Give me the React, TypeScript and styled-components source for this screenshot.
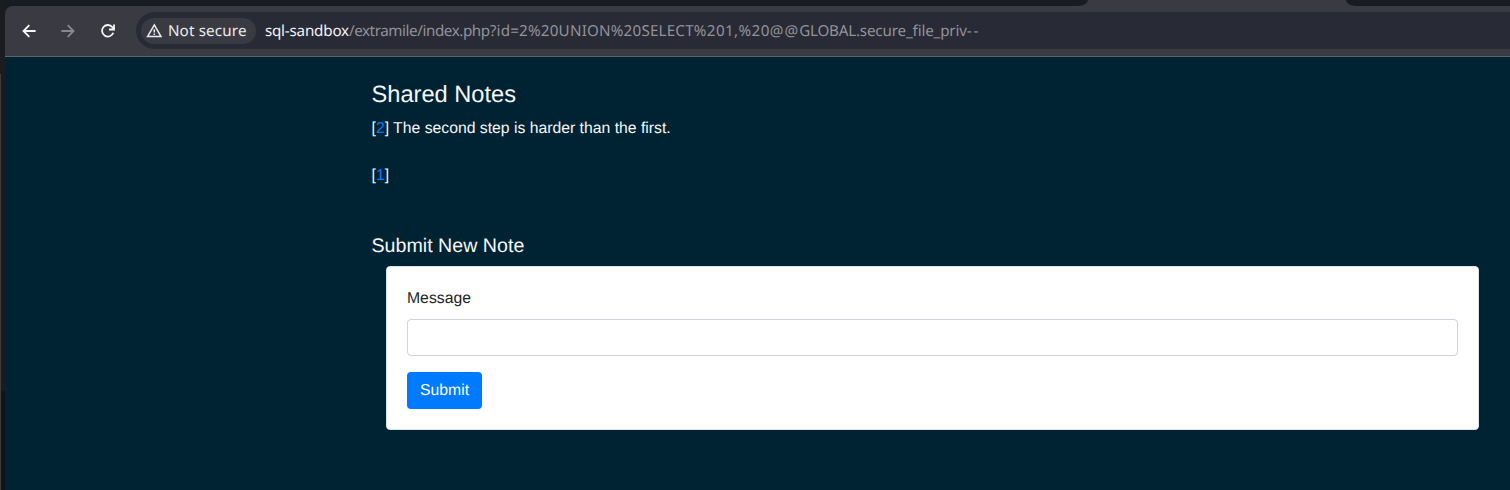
import React from 'react';
import styled, { createGlobalStyle } from 'styled-components';

const GlobalStyle = createGlobalStyle`
  *, *::before, *::after { box-sizing: border-box; }
  html, body { margin: 0; height: 490px; overflow: hidden; background: #1b1d22; }
`;

const Desktop = styled.div`
  display: grid;
  grid-template-columns: 5px 1fr;
  width: 1510px;
  height: 490px;
  overflow: hidden;
  background: #1a1c24;
  font-family: 'Liberation Sans', Arial, sans-serif;
  text-rendering: geometricPrecision;
`;

const WindowEdge = styled.div`
  background: linear-gradient(#1b1c1f 0 390px, #111414 392px 100%);
  padding-top: 74px;

  &::before {
    content: '';
    display: block;
    width: 1px;
    height: 416px;
    background: #3b3c3f;
  }
`;

const Browser = styled.div`
  display: flex;
  flex-direction: column;
  min-width: 0;
`;

const TabStrip = styled.div`
  display: flex;
  flex: 0 0 6px;
  background: #3a3b42;
`;

const StripSegment = styled.div<{ $width?: number; $side: 'left' | 'right' }>`
  ${({ $width }) => ($width ? `width: ${$width}px;` : 'flex: 1;')}
  background: #191b24;
  border-radius: ${({ $side }) => ($side === 'left' ? '0 0 10px 0 / 0 0 6px 0' : '0 0 0 10px / 0 0 0 6px')};
`;

const ActiveTab = styled.div`
  width: 258px;
  background: #3a3b42;
`;

const ToolbarShell = styled.div`
  flex: 0 0 51px;
  background: #191b24;
`;

const Toolbar = styled.div`
  display: flex;
  align-items: center;
  height: 51px;
  padding: 0 0 1px 14px;
  border-bottom: 1px solid #626367;
  border-radius: 8px 0 0 0;
  background: #3a3b42;
`;

const NavButton = styled.button<{ $dim?: boolean }>`
  display: flex;
  width: 20px;
  height: 20px;
  margin: 0 19.3px 0 0;
  padding: 0;
  border: 0;
  background: none;
  color: ${({ $dim }) => ($dim ? '#88898d' : '#f8f8f9')};
`;

const AddressBar = styled.div`
  display: flex;
  flex: 1;
  align-items: center;
  height: 37px;
  margin-left: -1px;
  padding-left: 5px;
  border-radius: 19px 0 0 19px;
  background: #282a35;
  font: 15.2px/20px 'Noto Sans', sans-serif;
  white-space: pre;
`;

const SecurityChip = styled.div`
  display: flex;
  flex: 0 0 115px;
  align-items: center;
  gap: 6px;
  height: 26px;
  padding-left: 5px;
  border-radius: 13px;
  background: #3a3b42;
  color: #ebebed;
  letter-spacing: 0.15px;
`;

const Url = styled.div`
  margin-left: 9px;
  color: #929399;
`;

const UrlPart = styled.span<{ $tracking: number; $host?: boolean }>`
  color: ${({ $host }) => ($host ? '#f3f3f5' : 'inherit')};
  letter-spacing: ${({ $tracking }) => $tracking}px;
`;

const Page = styled.main`
  flex: 1;
  padding: 24px 31px 0 366.5px;
  background: #002333;
  color: #f5f7f8;
  font-size: 15.76px;
  line-height: 23.4px;
`;

const Title = styled.h1`
  margin: 0 0 8px;
  font-size: 23.63px;
  font-weight: 400;
  line-height: 28px;
`;

const Note = styled.p`
  height: 23.4px;
  margin: 0 0 23.4px;
`;

const NoteLink = styled.a`
  color: #007bff;
`;

const Subtitle = styled.h2`
  margin: 0 0 8px;
  padding-top: 23px;
  font-size: 19.65px;
  font-weight: 400;
  line-height: 24px;
`;

const Card = styled.form`
  height: 164px;
  margin-left: 14.5px;
  padding: 20px;
  border: 1px solid #dfe2e4;
  border-radius: 4px;
  background: #fff;
  color: #212529;
`;

const Label = styled.label`
  display: block;
  margin-bottom: 8.6px;
`;

const Input = styled.input`
  display: block;
  width: 100%;
  height: 37px;
  margin-bottom: 16px;
  padding: 6px 12px;
  border: 1px solid #ced4da;
  border-radius: 4px;
  background: #fff;
`;

const SubmitButton = styled.button`
  width: 75px;
  height: 37px;
  padding: 1px 0 0;
  border: 0;
  border-radius: 4px;
  background: #007bff;
  color: #fff;
  font: 15.76px/23px 'Liberation Sans', Arial, sans-serif;
  text-rendering: inherit;
`;

const BackIcon = () => (
  <svg width="20" height="20" viewBox="0 0 20 20" fill="none" stroke="currentColor" strokeWidth="1.8">
    <path d="M16.6 10H4.8M10.3 4.2 4.5 10l5.8 5.8" />
  </svg>
);

const ForwardIcon = () => (
  <svg width="20" height="20" viewBox="0 0 20 20" fill="none" stroke="currentColor" strokeWidth="1.8">
    <path d="M3.4 10h11.8M9.7 4.2l5.8 5.8-5.8 5.8" />
  </svg>
);

const ReloadIcon = () => (
  <svg width="20" height="20" viewBox="0 0 20 20" fill="none" stroke="currentColor" strokeWidth="1.8">
    <path d="M15.3 11.8A5.8 5.8 0 1 1 14.4 6.2L15.8 8" />
    <path d="M16 3.4v5.1h-5" />
  </svg>
);

const WarningIcon = () => (
  <svg width="16" height="16" viewBox="0 0 16 16" fill="none" stroke="currentColor" strokeWidth="1.5">
    <path d="M8.3 1.9 15 13.6H1.6Z" />
    <path d="M8.3 6.2v3.3M8.3 10.6v1.5" />
  </svg>
);

export default function App() {
  return (
    <>
      <GlobalStyle />
      <Desktop>
        <WindowEdge />
        <Browser>
          <TabStrip>
            <StripSegment $width={1083} $side="left" />
            <ActiveTab />
            <StripSegment $side="right" />
          </TabStrip>
          <ToolbarShell>
            <Toolbar>
              <NavButton aria-label="Back"><BackIcon /></NavButton>
              <NavButton $dim aria-label="Forward"><ForwardIcon /></NavButton>
              <NavButton aria-label="Reload"><ReloadIcon /></NavButton>
              <AddressBar>
                <SecurityChip>
                  <WarningIcon />
                  <span>Not secure</span>
                </SecurityChip>
                <Url>
                  <UrlPart $host $tracking={-0.2}>sql-sandbox</UrlPart>
                  <UrlPart $tracking={-0.42}>/extramile/index.php</UrlPart>
                  <UrlPart $tracking={0.2}>?id=2%20UNION%20SELECT</UrlPart>
                  <UrlPart $tracking={0.4}>%201,%20</UrlPart>
                  <UrlPart $tracking={1.1}>@@</UrlPart>
                  <UrlPart $tracking={-0.25}>GLOBAL</UrlPart>
                  <UrlPart $tracking={-0.15}>.secure_file_priv</UrlPart>
                  <UrlPart $tracking={1.9}>--</UrlPart>
                </Url>
              </AddressBar>
            </Toolbar>
          </ToolbarShell>
          <Page>
            <Title>Shared Notes</Title>
            <Note>[<NoteLink>2</NoteLink>] The second step is harder than the first.</Note>
            <Note>[<NoteLink>1</NoteLink>]</Note>
            <Subtitle>Submit New Note</Subtitle>
            <Card>
              <Label htmlFor="message">Message</Label>
              <Input id="message" />
              <SubmitButton type="button">Submit</SubmitButton>
            </Card>
          </Page>
        </Browser>
      </Desktop>
    </>
  );
}
